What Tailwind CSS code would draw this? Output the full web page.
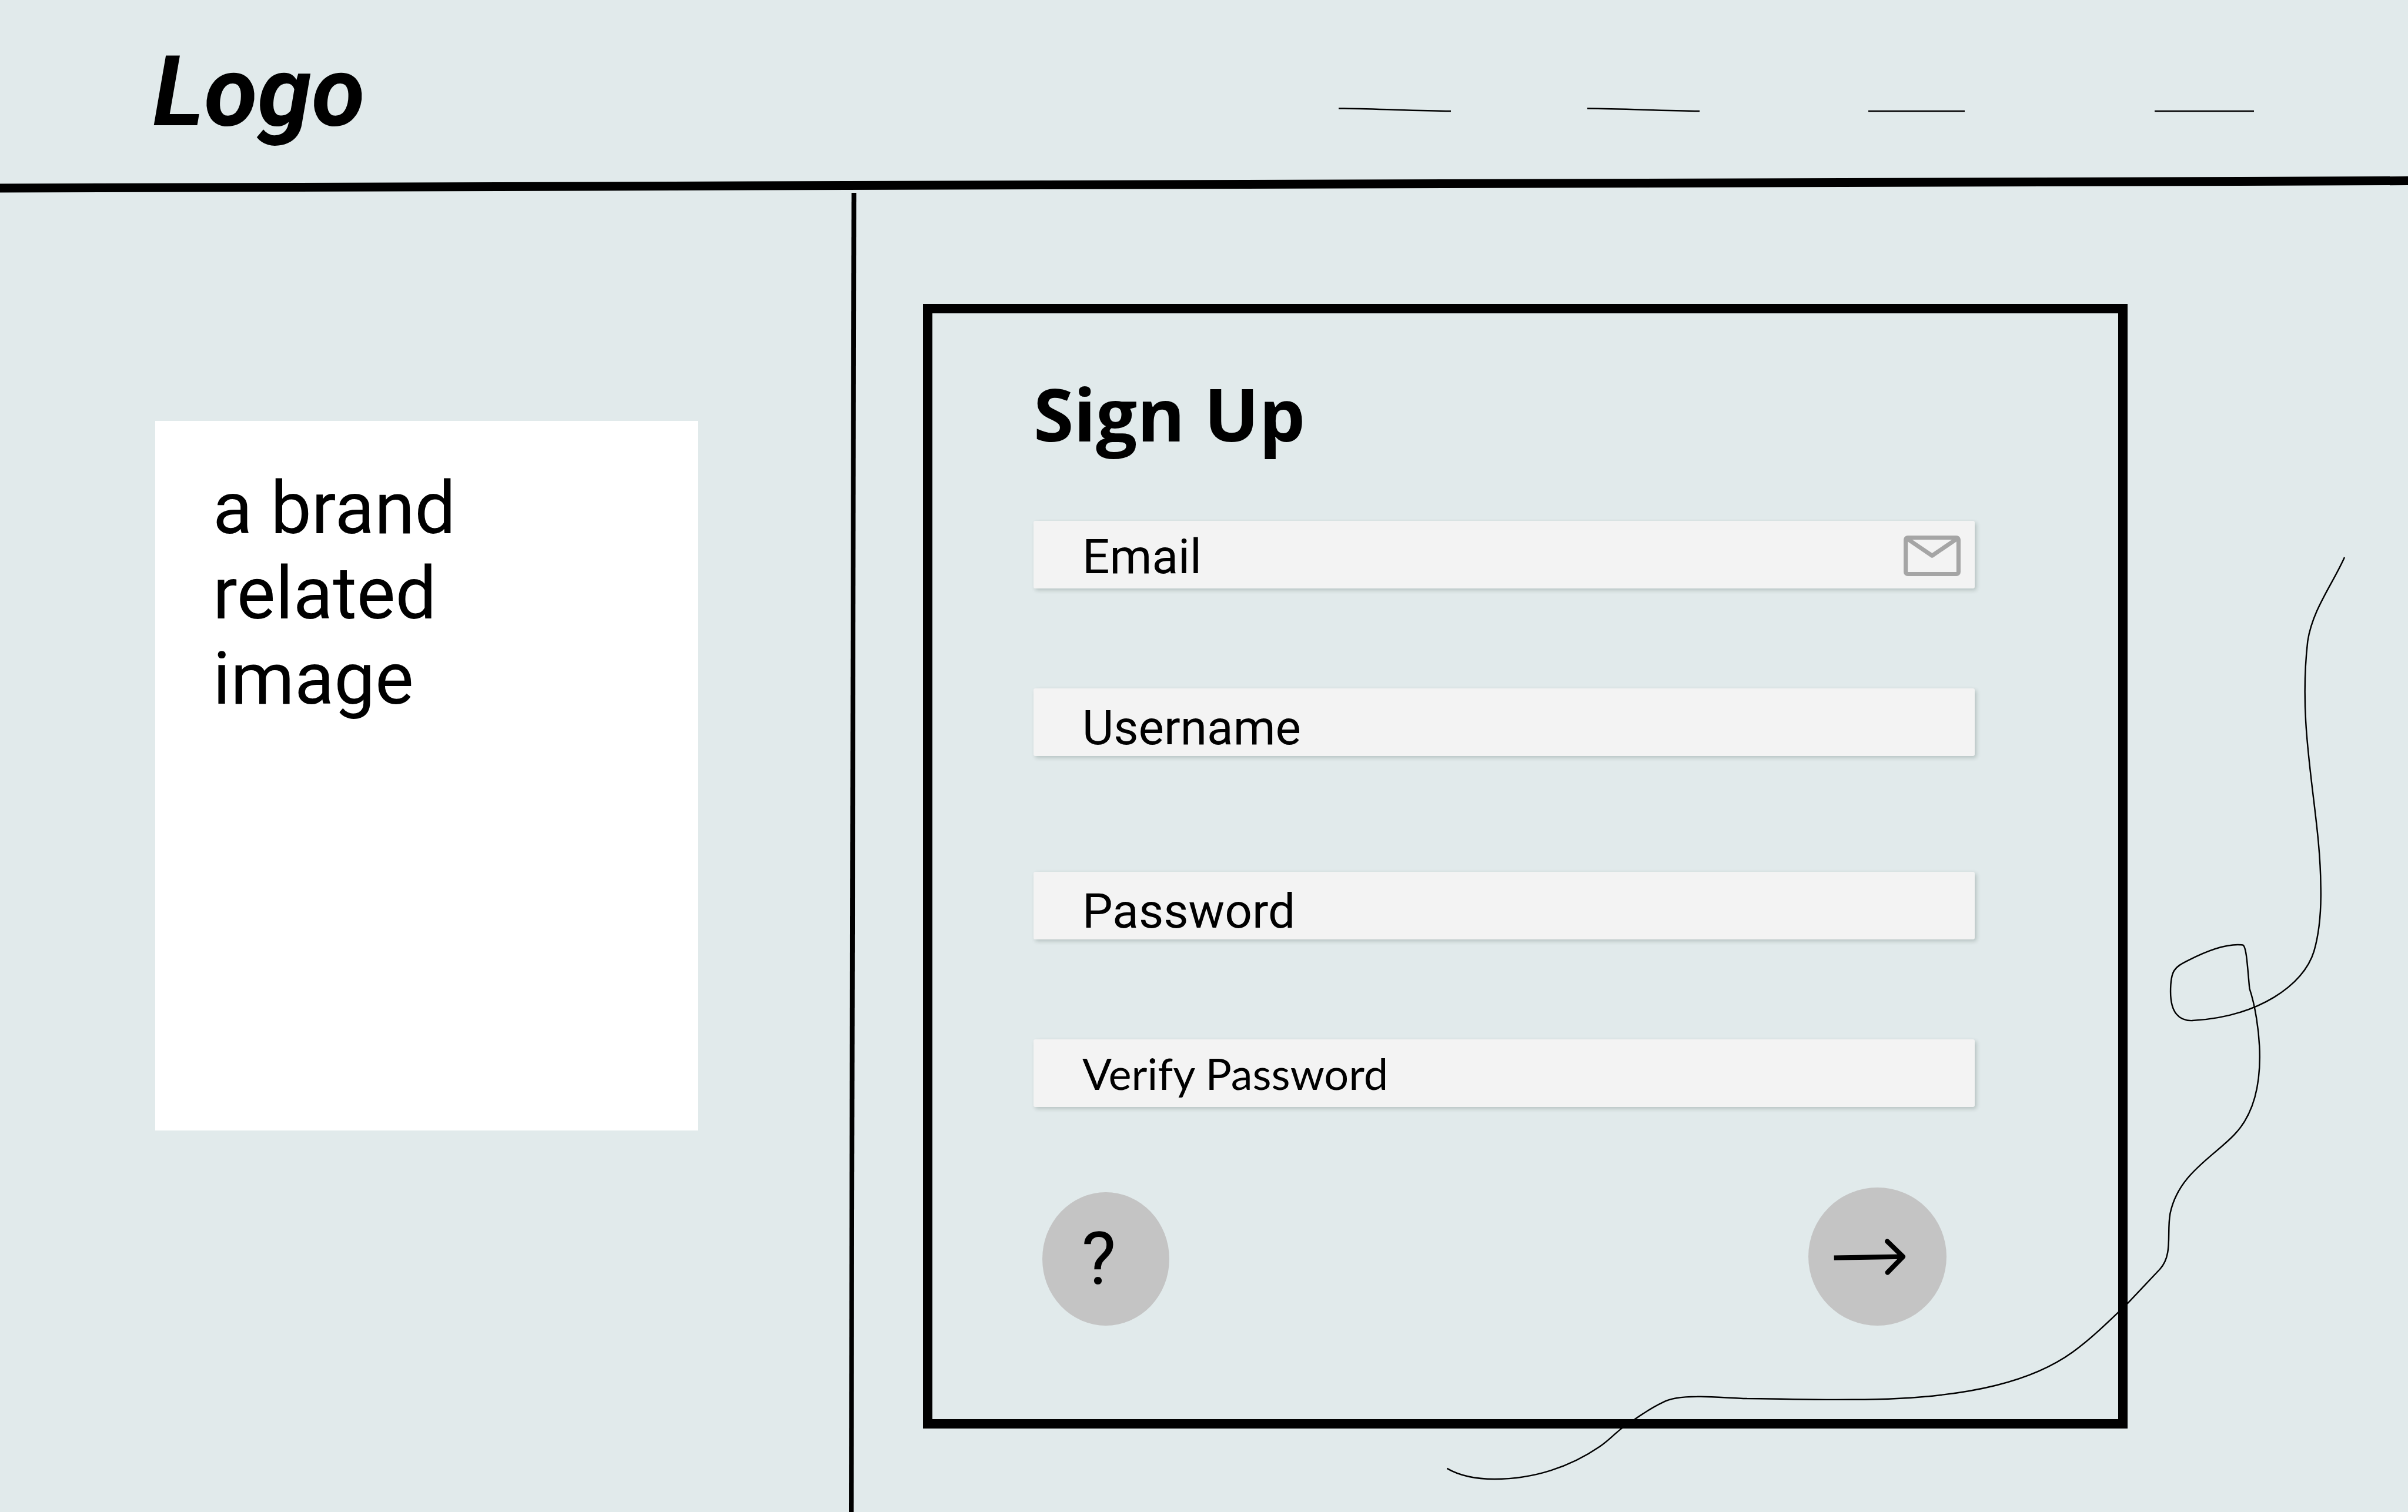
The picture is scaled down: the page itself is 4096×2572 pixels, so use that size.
<!DOCTYPE html>
<html lang="en">
<head>
<meta charset="utf-8">
<title>Sign Up</title>
<script src="https://cdn.jsdelivr.net/npm/@tailwindcss/browser@4"></script>
</head>
<body class="relative flex min-h-screen flex-col overflow-x-hidden bg-[#e1eaeb] font-['Roboto',sans-serif] text-black">

  <header>
    <div class="flex h-[300px] items-center pl-[260px] pr-[262px] pt-3.5">
      <a href="#" class="text-[166px] leading-none font-bold italic">Logo</a>
      <nav class="mb-[-60px] ml-auto flex" aria-label="Main">
        <a href="#" aria-label="Home"><svg class="h-2 w-[191px] overflow-visible" viewBox="0 0 191 8" fill="none" stroke="#000" stroke-width="2.5"><path d="M0 1.5C64 2 128 5.500 191 6"/></svg></a>
        <a href="#" aria-label="About" class="ml-[232px]"><svg class="h-2 w-[191px] overflow-visible" viewBox="0 0 191 8" fill="none" stroke="#000" stroke-width="2.5"><path d="M0 1.5C64 2 128 5.500 191 6"/></svg></a>
        <a href="#" aria-label="Services" class="ml-[287px]"><svg class="h-2 w-[164px] overflow-visible" viewBox="0 0 164 8" fill="none" stroke="#000" stroke-width="2.5"><path d="M0 6H164"/></svg></a>
        <a href="#" aria-label="Contact" class="ml-[323px]"><svg class="h-2 w-[169px] overflow-visible" viewBox="0 0 169 8" fill="none" stroke="#000" stroke-width="2.5"><path d="M0 6H169"/></svg></a>
      </nav>
    </div>
    <svg class="block h-7 w-full overflow-visible" viewBox="0 0 4096 28" preserveAspectRatio="none" aria-hidden="true"><path d="M-10 20L4106 7.5" stroke="#000" stroke-width="15"/></svg>
  </header>

  <main class="grid flex-1 grid-cols-[1444fr_16px_2636fr]">
    <section class="pl-[264px] pt-[388px]">
      <div class="aspect-[923/1207] w-[78.2%] bg-white pl-[98px] pt-[76px]">
        <p class="text-[124px] leading-[145px]">a brand<br>related<br>image</p>
      </div>
    </section>

    <svg class="h-full w-4" viewBox="0 0 16 2244" preserveAspectRatio="none" aria-hidden="true"><path d="M8.500 0L4 2244" stroke="#000" stroke-width="8"/></svg>

    <section class="pb-[142px] pl-[110px] pt-[189px]">
      <form class="w-[81.1%] border-16 border-black pb-[159px] pl-[172px] pr-[244px] pt-[90px]">
        <h1 class="font-['Open_Sans',sans-serif] text-[124px] leading-[160px] font-bold">Sign Up</h1>

        <div class="mt-[103px] flex h-[115px] items-center rounded-[3px] bg-[#f3f3f3] pl-[83px] pr-6 shadow-[3px_3px_7px_rgba(0,30,20,0.2)]">
          <label for="email" class="pt-1.5 text-[82px] leading-[100px]">Email</label>
          <input id="email" type="email" class="h-full min-w-0 flex-1 px-6 text-[82px] outline-none">
          <svg class="mt-1 h-[69px] w-[97px]" viewBox="0 0 354 252" fill="none" stroke="#a5a5a5" stroke-width="26" stroke-linejoin="round" aria-hidden="true"><rect x="13" y="13" width="328" height="226" rx="13"/><path d="M14 14L177 125L340 14"/></svg>
        </div>

        <div class="mt-[170px] flex h-[115px] items-center rounded-[3px] bg-[#f3f3f3] pl-[83px] pr-6 shadow-[3px_3px_7px_rgba(0,30,20,0.2)]">
          <label for="username" class="pt-[18px] text-[82px] leading-[100px]">Username</label>
          <input id="username" type="text" class="h-full min-w-0 flex-1 px-6 text-[82px] outline-none">
        </div>

        <div class="mt-[197px] flex h-[115px] items-center rounded-[3px] bg-[#f3f3f3] pl-[83px] pr-6 shadow-[3px_3px_7px_rgba(0,30,20,0.2)]">
          <label for="password" class="pt-[18px] text-[82px] leading-[100px]">Password</label>
          <input id="password" type="password" class="h-full min-w-0 flex-1 px-6 text-[82px] outline-none">
        </div>

        <div class="mt-[170px] flex h-[115px] items-center rounded-[3px] bg-[#f3f3f3] pl-[83px] pr-6 shadow-[3px_3px_7px_rgba(0,30,20,0.2)]">
          <label for="verify" class="font-['Lato',sans-serif] text-[74px] leading-[100px]">Verify Password</label>
          <input id="verify" type="password" class="h-full min-w-0 flex-1 px-6 text-[82px] outline-none">
        </div>

        <div class="mt-[137px] flex items-end justify-between pl-[15px] pr-12">
          <button type="button" aria-label="Help" class="flex h-[227px] w-[216px] items-center justify-center rounded-[50%] bg-[#c4c4c4] pr-6 text-[124px] leading-none">?</button>
          <button type="submit" aria-label="Continue" class="h-[235px] w-[235px] rounded-full bg-[#c4c4c4]">
            <svg class="h-full w-full" viewBox="0 0 855 855" fill="none" stroke="#000" stroke-width="30" stroke-linejoin="round" aria-hidden="true"><path d="M159 435L586 428"/><path stroke-linecap="round" d="M488 333L586 428L490 526"/></svg>
          </button>
        </div>
      </form>
    </section>
  </main>

  <svg class="pointer-events-none absolute inset-0 h-full w-full" viewBox="0 0 4969 3120" preserveAspectRatio="none" fill="none" stroke="#000" stroke-width="3" aria-hidden="true">
    <path d="M4838 1150C4812 1208 4772 1258 4762 1323C4740 1515 4788 1668 4789 1830C4790 1875 4786 1925 4775 1963C4754 2033 4660 2098 4524 2106C4497 2107 4479 2090 4479 2046C4479 2002 4487 1996 4515 1982C4550 1964 4595 1946 4628 1950C4636 1952 4638 2000 4642 2040C4652 2070 4663 2125 4663 2181C4663 2245 4648 2303 4610 2342C4566 2388 4494 2424 4478 2505C4471 2545 4484 2590 4457 2619L4391 2689C4350 2728 4317 2761 4277 2790C4205 2842 4080 2888 3822 2888C3730 2889 3660 2886 3605 2886C3570 2885 3530 2881 3502 2882C3470 2882 3445 2886 3431 2894C3395 2911 3370 2932 3347 2947C3330 2960 3320 2972 3301 2985C3240 3027 3165 3052 3084 3052C3045 3052 3010 3044 2986 3030"/>
  </svg>
</body>
</html>
